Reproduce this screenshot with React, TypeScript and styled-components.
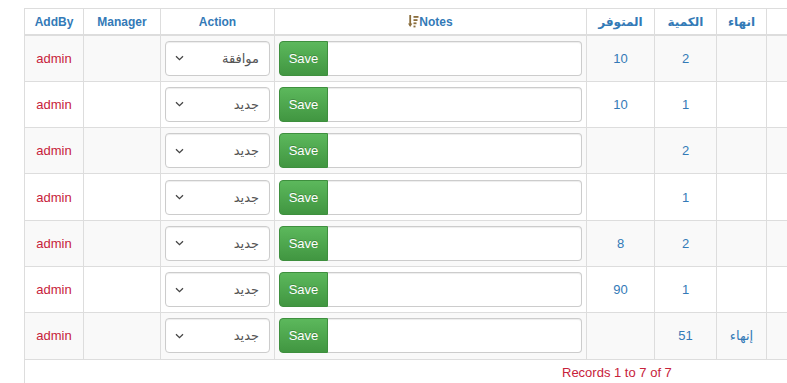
import React from "react";
import styled, { createGlobalStyle } from "styled-components";

const Global = createGlobalStyle`
  html, body { margin: 0; padding: 0; background: #fff; overflow: hidden; }
  body { font-family: "Liberation Sans", "DejaVu Sans", Arial, sans-serif; font-size: 13px; color: #333; }
`;

const Page = styled.div`
  padding: 8px 0 0 24px;
  width: 900px;
`;

const Table = styled.table`
  border-collapse: collapse;
  table-layout: fixed;
  width: 803px;
`;

const Th = styled.th`
  border: 1px solid #ddd;
  border-bottom: 2px solid #ddd;
  color: #337ab7;
  font-weight: bold;
  font-size: 12px;
  height: 25px;
  padding: 0 4px;
  text-align: center;
  vertical-align: middle;
  white-space: nowrap;
`;

const Tr = styled.tr<{ $striped: boolean }>`
  background: ${(p) => (p.$striped ? "#f9f9f9" : "#fff")};
`;

const Td = styled.td<{ $tone?: "red" | "blue" }>`
  border: 1px solid #ddd;
  height: 46.3px;
  box-sizing: border-box;
  padding: 0 4px;
  text-align: center;
  vertical-align: middle;
  font-size: 13px;
  color: ${(p) => (p.$tone === "red" ? "#c7223a" : p.$tone === "blue" ? "#337ab7" : "#333")};
`;

const Select = styled.div`
  display: flex;
  align-items: center;
  justify-content: space-between;
  height: 35px;
  box-sizing: border-box;
  border: 1px solid #ccc;
  border-radius: 4px;
  background: #fff;
  padding: 0 10px 0 9px;
  box-shadow: inset 0 1px 1px rgba(0, 0, 0, 0.075);
`;

const SelectText = styled.span`
  font-size: 13px;
  color: #555;
  direction: rtl;
`;

const InputGroup = styled.div`
  display: flex;
  height: 35px;
`;

const SaveButton = styled.button`
  width: 49px;
  height: 35px;
  border: 1px solid #3e8f3e;
  border-radius: 4px 0 0 4px;
  background: linear-gradient(to bottom, #5cb85c 0%, #419641 100%);
  color: #fff;
  font-family: "Liberation Sans", Arial, sans-serif;
  font-size: 13px;
  padding: 0;
  text-shadow: 0 -1px 0 rgba(0, 0, 0, 0.2);
`;

const NoteInput = styled.div`
  flex: 1;
  border: 1px solid #ccc;
  border-left: none;
  border-radius: 0 4px 4px 0;
  background: #fff;
  box-shadow: inset 0 1px 1px rgba(0, 0, 0, 0.075);
`;

const Footer = styled.div`
  border-left: 1px solid #ddd;
  height: 40px;
  padding: 5px 0 0 537px;
  box-sizing: border-box;
  color: #c7223a;
  font-size: 13px;
`;

const Chevron = () => (
  <svg width="9" height="6" viewBox="0 0 9 6">
    <path d="M1 1.2 L4.5 4.6 L8 1.2" stroke="#444" strokeWidth="1.3" fill="none" />
  </svg>
);

const SortIcon = () => (
  <svg width="11" height="13" viewBox="0 0 11 13" style={{ verticalAlign: "-2px" }}>
    <path d="M2.2 0 V10.5" stroke="#8a6d3b" strokeWidth="1.8" />
    <path d="M0 8.5 L2.2 12 L4.4 8.5 Z" fill="#8a6d3b" />
    <rect x="5.5" y="1" width="5" height="1.8" fill="#8a6d3b" />
    <rect x="5.5" y="4.2" width="4" height="1.8" fill="#8a6d3b" />
    <rect x="5.5" y="7.4" width="3" height="1.8" fill="#8a6d3b" />
    <rect x="5.5" y="10.6" width="2" height="1.8" fill="#8a6d3b" />
  </svg>
);

const rows = [
  { action: "موافقة", avail: "10", qty: "2", end: "" },
  { action: "جديد", avail: "10", qty: "1", end: "" },
  { action: "جديد", avail: "", qty: "2", end: "" },
  { action: "جديد", avail: "", qty: "1", end: "" },
  { action: "جديد", avail: "8", qty: "2", end: "" },
  { action: "جديد", avail: "90", qty: "1", end: "" },
  { action: "جديد", avail: "", qty: "51", end: "إنهاء" },
];

export default function App() {
  return (
    <>
      <Global />
      <Page>
        <Table>
          <colgroup>
            <col style={{ width: 59 }} />
            <col style={{ width: 77 }} />
            <col style={{ width: 114 }} />
            <col style={{ width: 312 }} />
            <col style={{ width: 68 }} />
            <col style={{ width: 62 }} />
            <col style={{ width: 50 }} />
            <col style={{ width: 61 }} />
          </colgroup>
          <thead>
            <tr>
              <Th>AddBy</Th>
              <Th>Manager</Th>
              <Th>Action</Th>
              <Th>
                <SortIcon />
                Notes
              </Th>
              <Th>المتوفر</Th>
              <Th>الكمية</Th>
              <Th>انهاء</Th>
              <Th></Th>
            </tr>
          </thead>
          <tbody>
            {rows.map((r, i) => (
              <Tr key={i} $striped={i % 2 === 0}>
                <Td $tone="red">admin</Td>
                <Td></Td>
                <Td>
                  <Select>
                    <Chevron />
                    <SelectText>{r.action}</SelectText>
                  </Select>
                </Td>
                <Td>
                  <InputGroup>
                    <SaveButton>Save</SaveButton>
                    <NoteInput />
                  </InputGroup>
                </Td>
                <Td $tone="blue">{r.avail}</Td>
                <Td $tone="blue">{r.qty}</Td>
                <Td $tone="blue">{r.end}</Td>
                <Td></Td>
              </Tr>
            ))}
          </tbody>
        </Table>
        <Footer>Records 1 to 7 of 7</Footer>
      </Page>
    </>
  );
}
